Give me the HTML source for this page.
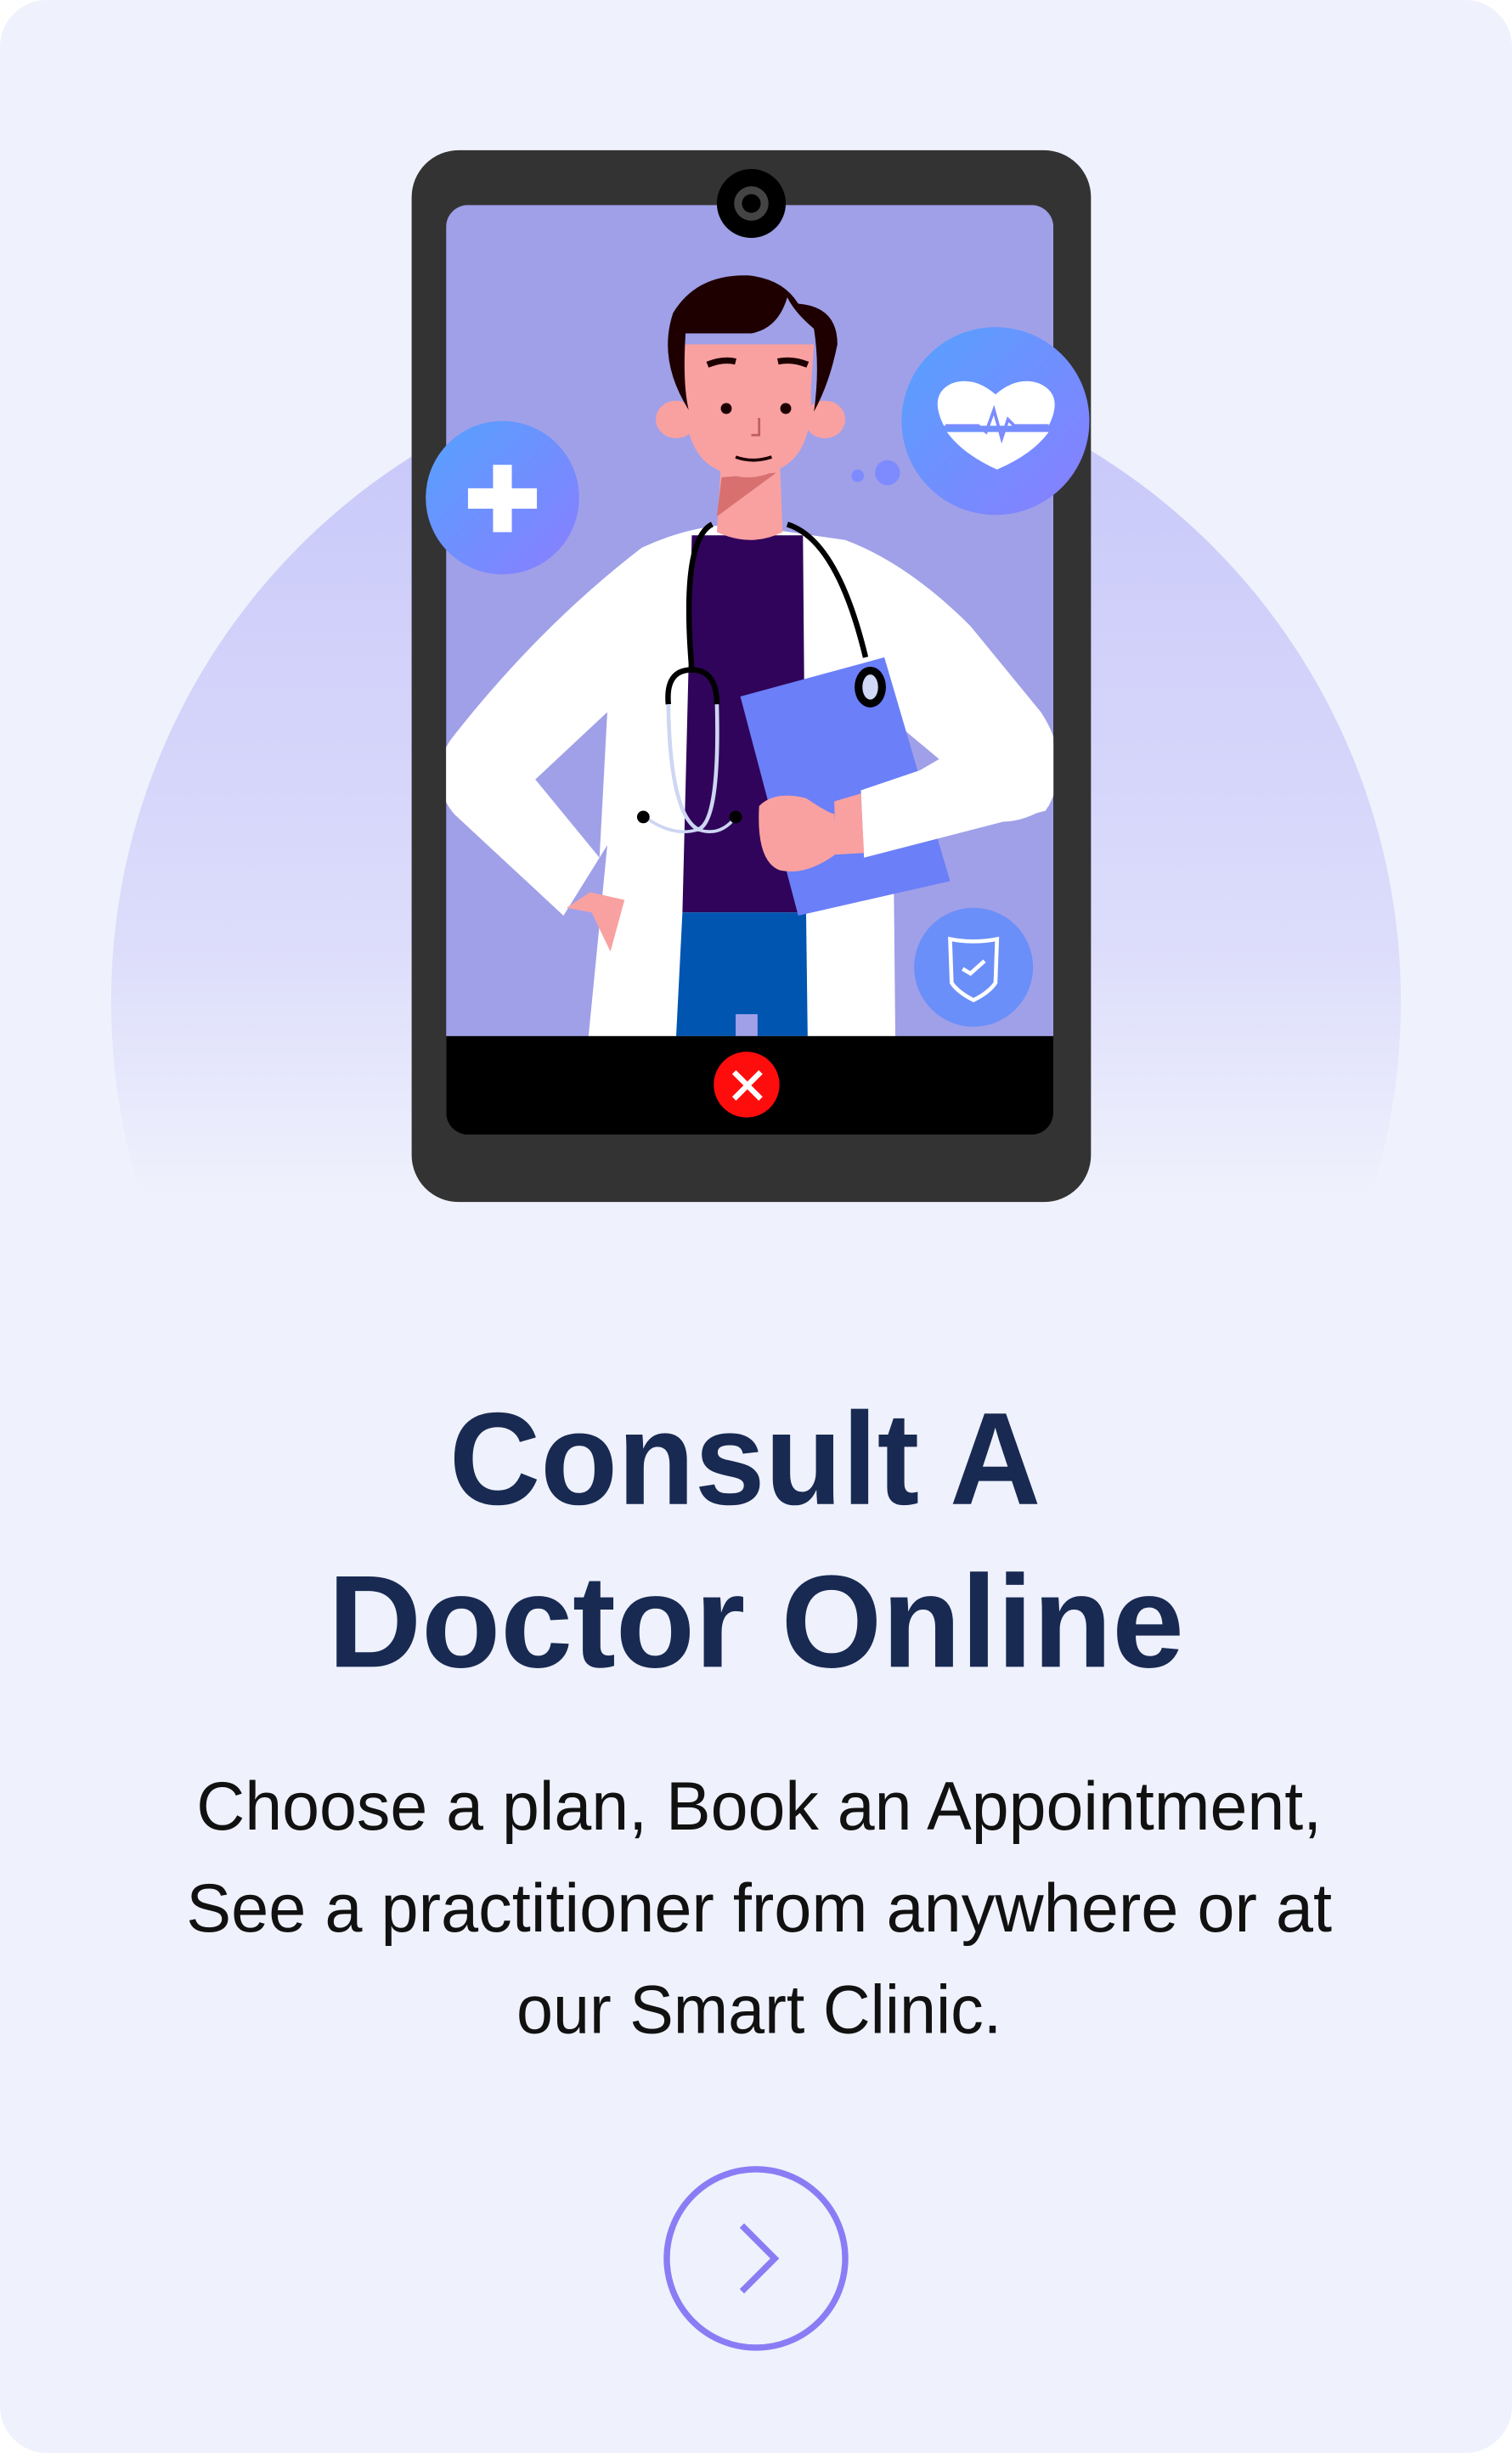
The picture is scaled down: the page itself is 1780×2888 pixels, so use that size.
<!DOCTYPE html>
<html><head><meta charset="utf-8"><style>
html,body{margin:0;padding:0;background:#fff;}
svg{display:block;}
</style></head><body>
<svg width="1780" height="2888" viewBox="0 0 966 1567.3" preserveAspectRatio="none" xmlns="http://www.w3.org/2000/svg">
<defs>
<linearGradient id="bg" x1="0" y1="0" x2="0" y2="1">
<stop offset="0" stop-color="#c6c6fa"/><stop offset="0.45" stop-color="#dcdcfb"/><stop offset="0.65" stop-color="#eff1fc"/>
</linearGradient>
<linearGradient id="ic" x1="0" y1="0" x2="1" y2="1">
<stop offset="0" stop-color="#55a2ff"/><stop offset="1" stop-color="#8a7dff"/>
</linearGradient>
<clipPath id="scr"><rect x="285" y="131" width="388" height="594" rx="14"/></clipPath>
</defs>
<rect x="0" y="0" width="966" height="1567.3" rx="30" fill="#eff1fc"/>
<circle cx="483" cy="640" r="412" fill="url(#bg)"/>
<!-- tablet -->
<rect x="263" y="96" width="434" height="672" rx="30" fill="#333"/>
<g clip-path="url(#scr)">
<rect x="285" y="131" width="388" height="594" fill="#a0a0e8"/>
<path d="M410 350 Q440 336 470 335 L540 345 Q580 360 620 400 L665 455 Q685 485 670 515 Q655 525 640 525 L550 548 L540 520 L600 485 L570 460 L572 662 L376 662 L388 540 L360 585 L290 520 Q270 495 290 470 Q345 400 410 350Z" fill="#fff"/>
<path d="M388 455 L342 498 L383 548Z" fill="#a0a0e8"/>
<path d="M442 342 L513 342 L515 583 L436 583Z" fill="#30045a"/>
<path d="M436 583 L515 583 L516 662 L432 662Z" fill="#0055b0"/>
<rect x="470" y="648" width="14" height="16" fill="#a0a0e8"/>
<path d="M461 290 L498 290 L500 340 Q480 350 458 340Z" fill="#f9a1a1"/>
<path d="M461 305 L496 302 L458 330Z" fill="#d87070"/>
<ellipse cx="432" cy="268" rx="13" ry="12" fill="#f9a1a1"/>
<ellipse cx="527" cy="268" rx="13" ry="12" fill="#f9a1a1"/>
<path d="M437 220 L520 220 L518 250 Q520 290 497 300 Q478 310 458 300 Q437 290 437 250Z" fill="#f9a1a1"/>
<path d="M440 262 Q420 230 430 200 Q445 175 478 176 Q500 178 510 194 Q535 196 535 220 Q530 245 520 263 Q524 235 520 210 Q508 200 503 190 Q497 210 480 213 L438 213 Q436 245 440 262Z" fill="#1e0000"/>
<circle cx="464" cy="261" r="3.5" fill="#1e0000"/><circle cx="502" cy="261" r="3.5" fill="#1e0000"/>
<path d="M470 292 Q481 296 493 292" stroke="#1e0000" stroke-width="2" fill="none"/>
<path d="M452 233 Q462 229 470 231 M497 231 Q506 229 516 233" stroke="#1e0000" stroke-width="4" fill="none"/>
<path d="M485 267 L485 278 L480 278" stroke="#c06060" stroke-width="1.5" fill="none"/>
<path d="M362 580 L377 570 L399 575 L390 608 L378 583Z" fill="#f9a1a1"/>
<path d="M473 445 L565 420 L607 563 L510 585Z" fill="#6b7ff8"/>
<path d="M550 505 L600 488 L600 485 L670 470 Q685 490 668 518 L552 548Z" fill="#fff"/>
<path d="M533 512 L550 507 L552 545 L534 546Z" fill="#f9a1a1"/>
<path d="M485 515 Q495 505 515 510 Q530 520 533 520 L535 545 Q515 560 498 556 Q483 550 485 515Z" fill="#f9a1a1"/>
<path d="M455 335 Q435 345 442 428" stroke="#000" stroke-width="3.5" fill="none"/>
<path d="M503 335 Q535 345 553 420" stroke="#000" stroke-width="3.5" fill="none"/>
<path d="M427 450 Q425 428 442 428 Q458 428 458 450" stroke="#000" stroke-width="3.5" fill="none"/>
<path d="M427 450 Q428 520 446 530 Q460 525 458 450" stroke="#cdd6f2" stroke-width="2.5" fill="none"/>
<path d="M412 522 Q430 535 446 530 Q460 535 470 522" stroke="#cdd6f2" stroke-width="2" fill="none"/>
<circle cx="411" cy="522" r="4" fill="#000"/><circle cx="470" cy="522" r="4" fill="#000"/>
<ellipse cx="556" cy="439" rx="10" ry="13" fill="#000"/><ellipse cx="556" cy="439" rx="5" ry="8" fill="#d0d8f5"/>
<rect x="285" y="662" width="388" height="70" fill="#000"/>
</g>
<circle cx="480" cy="130" r="22" fill="#000"/><circle cx="480" cy="130" r="11" fill="#444"/><circle cx="480" cy="130" r="6" fill="#000"/>
<circle cx="477" cy="693" r="21" fill="#ff0d0d"/>
<path d="M469 685 L486 702 M486 685 L469 702" stroke="#fff" stroke-width="3.5"/>
<circle cx="321" cy="318" r="49" fill="url(#ic)"/>
<path d="M315 297 h12 v15 h16 v13 h-16 v15 h-12 v-15 h-16 v-13 h16z" fill="#fff"/>
<circle cx="636" cy="269" r="60" fill="url(#ic)"/>
<path d="M636 252 Q650 240 664 245 Q680 252 670 272 L603 272 Q593 252 608 245 Q622 240 636 252Z M605 276 L670 276 Q660 290 637 300 Q615 290 605 276Z" fill="#fff"/>
<path d="M604 272 L625 272 L630 276 L635 262 L640 280 L644 268 L648 272 L670 272" stroke="#7b8bff" stroke-width="2" fill="none"/>
<circle cx="548" cy="304" r="4" fill="#7d8bff"/><circle cx="567" cy="302" r="8" fill="#7d8bff"/>
<circle cx="622" cy="618" r="38" fill="#6b8ff8"/>
<path d="M607 600 Q622 603 637 600 L636 628 Q632 634 622 639 Q612 634 608 628Z" stroke="#fff" stroke-width="2.5" fill="none"/>
<path d="M615 619 L620 622 L629 614" stroke="#fff" stroke-width="2.5" fill="none"/>
<g font-family="Liberation Sans, sans-serif" text-anchor="middle">
<text x="476" y="961" font-size="84" font-weight="700" fill="#182a52" textLength="378" lengthAdjust="spacingAndGlyphs">Consult A</text>
<text x="483" y="1065" font-size="84" font-weight="700" fill="#182a52" textLength="547" lengthAdjust="spacingAndGlyphs">Doctor Online</text>
<text x="485" y="1169" font-size="44" fill="#111" textLength="719" lengthAdjust="spacingAndGlyphs">Choose a plan, Book an Appointment,</text>
<text x="485" y="1234" font-size="44" fill="#111" textLength="732" lengthAdjust="spacingAndGlyphs">See a practitioner from anywhere or at</text>
<text x="485" y="1299" font-size="44" fill="#111" textLength="310" lengthAdjust="spacingAndGlyphs">our Smart Clinic.</text>
</g>
<circle cx="483" cy="1443" r="57" fill="none" stroke="#8a7cf5" stroke-width="4"/>
<path d="M474 1422 L495 1443 L474 1464" stroke="#8a7cf5" stroke-width="4" fill="none"/>
</svg>
</body></html>
